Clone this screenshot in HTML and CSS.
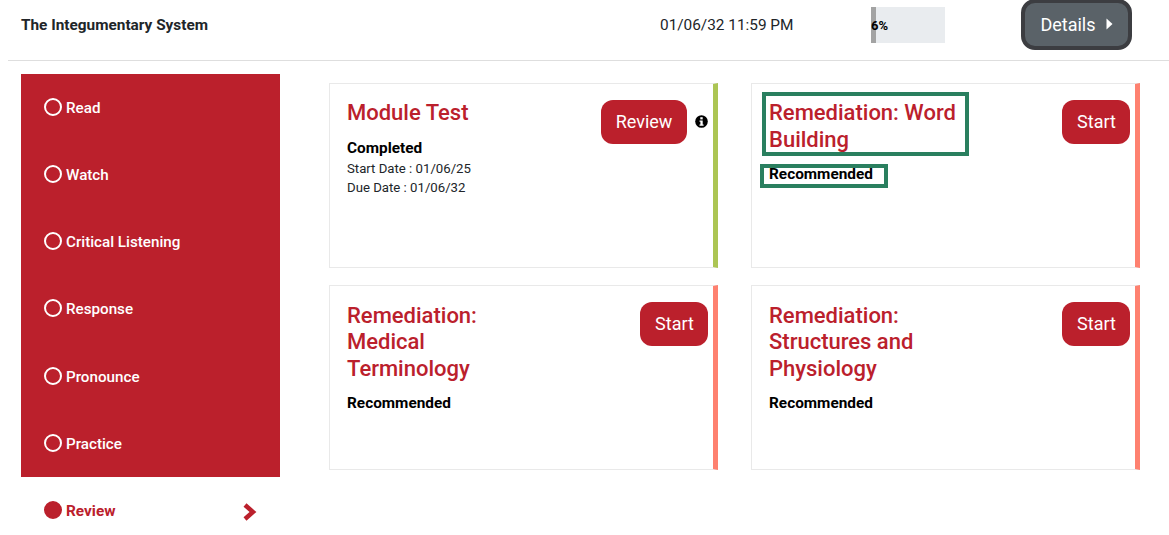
FILE: index.html
```html
<!DOCTYPE html>
<html lang="en">
<head>
<meta charset="utf-8">
<title>The Integumentary System</title>
<link rel="stylesheet" href="styles.css">
</head>
<body>
<header class="topbar">
  <div class="topic">The Integumentary System</div>
  <div class="datetime">01/06/32 11:59 PM</div>
  <div class="progress"><div class="progress-fill"></div><span class="progress-label">6%</span></div>
  <button class="details-btn">Details<svg class="caret" width="7" height="12" viewBox="0 0 7 12"><path d="M0.5 0.500 6.500 6 0.5 11.500Z" fill="#fff"/></svg></button>
</header>
<div class="content">
  <nav class="side">
    <ul class="side-list">
      <li class="side-item"><span class="dot"></span>Read</li>
      <li class="side-item"><span class="dot"></span>Watch</li>
      <li class="side-item"><span class="dot"></span>Critical Listening</li>
      <li class="side-item"><span class="dot"></span>Response</li>
      <li class="side-item"><span class="dot"></span>Pronounce</li>
      <li class="side-item"><span class="dot"></span>Practice</li>
    </ul>
    <div class="side-active"><span class="dot dot-fill"></span>Review
      <svg class="chev" width="16" height="20" viewBox="0 0 16 20"><path d="M3 3 11 10 3 17" fill="none" stroke="#bb202c" stroke-width="4.500"/></svg>
    </div>
  </nav>
  <main class="cards">
    <section class="card card-done">
      <div class="card-body">
        <h2 class="card-title">Module Test</h2>
        <div class="status">Completed</div>
        <div class="meta">Start Date : 01/06/25</div>
        <div class="meta">Due Date : 01/06/32</div>
      </div>
      <button class="action">Review</button>
      <svg class="info" width="13" height="13" viewBox="0 0 13 13"><circle cx="6.500" cy="6.500" r="6.300" fill="#000"/><rect x="5.300" y="2.200" width="2.400" height="2.200" fill="#fff"/><path d="M4.500 5.400H7.700V9.500H8.600V10.800H4.500V9.500H5.400V6.700H4.500Z" fill="#fff"/></svg>
    </section>
    <section class="card">
      <div class="card-body">
        <h2 class="card-title marked marked-title">Remediation: Word Building</h2>
        <div class="status marked marked-status">Recommended</div>
      </div>
      <button class="action">Start</button>
    </section>
    <section class="card">
      <div class="card-body">
        <h2 class="card-title">Remediation: Medical Terminology</h2>
        <div class="status">Recommended</div>
      </div>
      <button class="action">Start</button>
    </section>
    <section class="card">
      <div class="card-body">
        <h2 class="card-title">Remediation: Structures and Physiology</h2>
        <div class="status">Recommended</div>
      </div>
      <button class="action">Start</button>
    </section>
  </main>
</div>
</body>
</html>
```
FILE: styles.css
```css
*, *::after { box-sizing: border-box; }
html, body { margin: 0; height: 535px; overflow: hidden; }
body { background: #fff; font-family: Roboto, "Liberation Sans", sans-serif; color: #212529; }

.topbar {
  display: flex;
  align-items: center;
  height: 61px;
  margin-left: 8px;
  padding: 0 0 10px 13px;
  border-bottom: 1px solid #dedede;
}
.topic { width: 639px; font-size: 15.360px; font-weight: 700; color: #212529; }
.datetime { width: 211px; font-size: 15.360px; }
.progress { position: relative; width: 74px; height: 36px; background: #e9ecef; }
.progress-fill { width: 5px; height: 100%; background: #a3a3a3; }
.progress-label { position: absolute; left: 0; top: 11px; font-size: 13px; font-weight: 700; color: #000; }
.details-btn {
  display: flex; align-items: center; justify-content: center; gap: 10px;
  width: 111px; height: 51px; margin: -1px 0 0 76px; padding: 0;
  border: 4px solid #3c3d41; border-radius: 14px;
  background: #5a6268; color: #fff;
  font: 400 18px Roboto, sans-serif;
}
.caret { margin-top: -2px; }

.content { display: flex; align-items: flex-start; padding: 13px 0 0 21px; }
.side { width: 259px; }
.side-list { list-style: none; margin: 0; padding: 0.2px 0 0 23px; height: 403px; background: #bb202c; color: #fff; }
.side-item { display: flex; align-items: center; height: 67.200px; font-size: 15.200px; font-weight: 500; }
.dot { width: 18px; height: 18px; margin-right: 4px; border: 2px solid #fff; border-radius: 50%; margin-top: -2px; flex: none; }
.side-active { display: flex; align-items: center; height: 67px; padding-left: 23px; font-size: 15.360px; font-weight: 700; color: #bb202c; }
.dot-fill { background: #bb202c; border-color: #bb202c; }
.chev { margin-left: 127px; margin-top: 3px; }

.cards { display: grid; grid-template-columns: 389px 389px; grid-auto-rows: 185px; column-gap: 33px; row-gap: 17.400px; margin: 9px 0 0 49px; }
.card { display: flex; align-items: flex-start; padding: 16.250px 5px 0 17px; border: 1px solid #e9e9e9; border-right: 5px solid #fe8170; }
.card-done { border-right-color: #acc554; }
.card-body { flex: 1; min-width: 0; }
.card-title { width: 195px; margin: 0 0 12.050px; font-size: 22px; line-height: 26.500px; font-weight: 500; color: #bb202c; }
.status { font-size: 15.360px; line-height: 18px; font-weight: 700; color: #000; margin-bottom: 2px; }
.meta { font-size: 13.200px; line-height: 19px; color: #212529; }
.action { width: 68px; height: 44px; margin-top: -0.250px; border: 0; border-radius: 12px; background: #bb202c; color: #fff; font: 400 18px Roboto, sans-serif; padding: 0 0 2px 1px; flex: none; }
.card-done .action { width: 86px; margin-right: 8px; padding-left: 0; }
.info { margin: 15px 0 0 0; flex: none; }
.marked { position: relative; }
.marked::after { content: ""; position: absolute; border: 4px solid #2a7f5f; }
.marked-title::after { left: -7px; top: -8.250px; width: 207px; height: 64px; }
.marked-status::after { left: -9px; top: -1px; width: 128px; height: 24px; }
```
